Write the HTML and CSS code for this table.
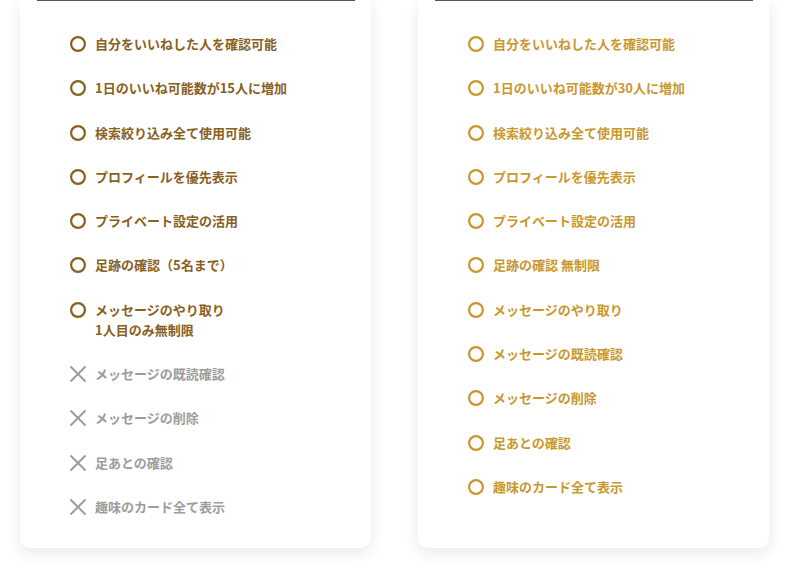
FILE: index.html
```html
<!DOCTYPE html>
<html lang="ja">
<head>
<meta charset="utf-8">
<link rel="stylesheet" href="styles.css">
</head>
<body>
<div class="plans">
  <section class="card card--basic">
    <div class="divider"></div>
    <ul class="features">
      <li class="ok"><svg class="ico" viewBox="0 0 16 16"><circle cx="8" cy="8" r="6.9"/></svg><span>自分をいいねした人を確認可能</span></li>
      <li class="ok"><svg class="ico" viewBox="0 0 16 16"><circle cx="8" cy="8" r="6.9"/></svg><span>1日のいいね可能数が15人に増加</span></li>
      <li class="ok"><svg class="ico" viewBox="0 0 16 16"><circle cx="8" cy="8" r="6.9"/></svg><span>検索絞り込み全て使用可能</span></li>
      <li class="ok"><svg class="ico" viewBox="0 0 16 16"><circle cx="8" cy="8" r="6.9"/></svg><span>プロフィールを優先表示</span></li>
      <li class="ok"><svg class="ico" viewBox="0 0 16 16"><circle cx="8" cy="8" r="6.9"/></svg><span>プライベート設定の活用</span></li>
      <li class="ok"><svg class="ico" viewBox="0 0 16 16"><circle cx="8" cy="8" r="6.9"/></svg><span>足跡の確認（5名まで）</span></li>
      <li class="ok"><svg class="ico" viewBox="0 0 16 16"><circle cx="8" cy="8" r="6.9"/></svg><span>メッセージのやり取り<br>1人目のみ無制限</span></li>
      <li class="ng"><svg class="ico" viewBox="0 0 18 18"><path d="M1.5 1.5L16.5 16.5M16.5 1.5L1.5 16.5"/></svg><span>メッセージの既読確認</span></li>
      <li class="ng"><svg class="ico" viewBox="0 0 18 18"><path d="M1.5 1.5L16.5 16.5M16.5 1.5L1.5 16.5"/></svg><span>メッセージの削除</span></li>
      <li class="ng"><svg class="ico" viewBox="0 0 18 18"><path d="M1.5 1.5L16.5 16.5M16.5 1.5L1.5 16.5"/></svg><span>足あとの確認</span></li>
      <li class="ng"><svg class="ico" viewBox="0 0 18 18"><path d="M1.5 1.5L16.5 16.5M16.5 1.5L1.5 16.5"/></svg><span>趣味のカード全て表示</span></li>
    </ul>
  </section>
  <section class="card card--premium">
    <div class="divider"></div>
    <ul class="features">
      <li class="ok"><svg class="ico" viewBox="0 0 16 16"><circle cx="8" cy="8" r="6.9"/></svg><span>自分をいいねした人を確認可能</span></li>
      <li class="ok"><svg class="ico" viewBox="0 0 16 16"><circle cx="8" cy="8" r="6.9"/></svg><span>1日のいいね可能数が30人に増加</span></li>
      <li class="ok"><svg class="ico" viewBox="0 0 16 16"><circle cx="8" cy="8" r="6.9"/></svg><span>検索絞り込み全て使用可能</span></li>
      <li class="ok"><svg class="ico" viewBox="0 0 16 16"><circle cx="8" cy="8" r="6.9"/></svg><span>プロフィールを優先表示</span></li>
      <li class="ok"><svg class="ico" viewBox="0 0 16 16"><circle cx="8" cy="8" r="6.9"/></svg><span>プライベート設定の活用</span></li>
      <li class="ok"><svg class="ico" viewBox="0 0 16 16"><circle cx="8" cy="8" r="6.9"/></svg><span>足跡の確認 無制限</span></li>
      <li class="ok"><svg class="ico" viewBox="0 0 16 16"><circle cx="8" cy="8" r="6.9"/></svg><span>メッセージのやり取り</span></li>
      <li class="ok"><svg class="ico" viewBox="0 0 16 16"><circle cx="8" cy="8" r="6.9"/></svg><span>メッセージの既読確認</span></li>
      <li class="ok"><svg class="ico" viewBox="0 0 16 16"><circle cx="8" cy="8" r="6.9"/></svg><span>メッセージの削除</span></li>
      <li class="ok"><svg class="ico" viewBox="0 0 16 16"><circle cx="8" cy="8" r="6.9"/></svg><span>足あとの確認</span></li>
      <li class="ok"><svg class="ico" viewBox="0 0 16 16"><circle cx="8" cy="8" r="6.9"/></svg><span>趣味のカード全て表示</span></li>
    </ul>
  </section>
</div>
</body>
</html>
```
FILE: styles.css
```css
* { box-sizing: border-box; }
html, body {
  margin: 0;
  padding: 0;
  background: #ffffff;
  font-family: "Noto Sans CJK JP", "Noto Sans", sans-serif;
}
.plans {
  display: flex;
  align-items: stretch;
  gap: 47px;
  padding: 0 0 0 20px;
  width: 800px;
  height: 566px;
}
.card {
  width: 351px;
  height: 548px;
  background: #fff;
  border-radius: 0 0 10px 10px;
  box-shadow: 0 5px 16px rgba(0, 0, 0, 0.09);
  padding: 0 16px;
}
.divider {
  height: 1px;
  background: #555;
  margin: 0 0 0 1px;
}
.features {
  list-style: none;
  margin: 0;
  padding: 33px 0 0 34px;
  display: flex;
  flex-direction: column;
  gap: 24.3px;
}
.features li {
  display: flex;
  align-items: flex-start;
  gap: 9px;
  font-size: 13px;
  line-height: 20px;
  font-weight: 700;
}
.ico {
  width: 16px;
  height: 16px;
  flex: none;
  margin-top: 2px;
  fill: none;
  stroke-width: 2.2;
}
.ng .ico {
  width: 18px;
  height: 18px;
  margin-top: 1px;
  margin-left: -1px;
  margin-right: -1px;
  stroke-width: 2;
}
.card--basic .ok { color: #87611f; }
.card--basic .ok .ico { stroke: #87611f; }
.card--premium .ok { color: #c8982f; }
.card--premium .ok .ico { stroke: #c8982f; }
.ng { color: #9c9c9c; }
.ng .ico { stroke: #9c9c9c; }
```
